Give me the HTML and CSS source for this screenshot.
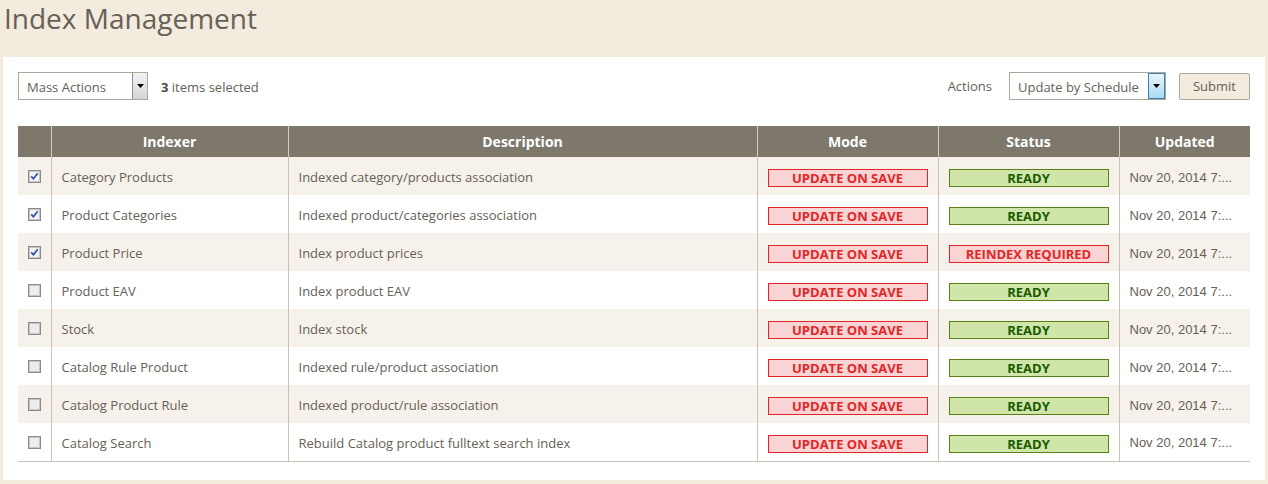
FILE: index.html
```html
<!DOCTYPE html>
<html>
<head>
<meta charset="utf-8">
<link rel="stylesheet" href="styles.css">
</head>
<body>
<h1 class="page-title">Index Management</h1>
<div class="panel">
  <div class="toolbar">
    <div class="toolbar-left">
      <div class="select mass">
        <span class="select-text">Mass Actions</span>
        <span class="select-arrow"><svg width="7" height="4" viewBox="0 0 7 4"><path d="M0 0h7L3.5 4z" fill="#000"/></svg></span>
      </div>
      <span class="selected-count"><b>3</b> items selected</span>
    </div>
    <div class="toolbar-right">
      <span class="actions-label">Actions</span>
      <div class="select schedule">
        <span class="select-text">Update by Schedule</span>
        <span class="select-arrow blue"><svg width="7" height="4" viewBox="0 0 7 4"><path d="M0 0h7L3.5 4z" fill="#000"/></svg></span>
      </div>
      <button class="submit">Submit</button>
    </div>
  </div>
  <table class="grid">
    <colgroup>
      <col class="c-check"><col class="c-indexer"><col class="c-desc"><col class="c-mode"><col class="c-status"><col class="c-updated">
    </colgroup>
    <thead>
      <tr><th></th><th>Indexer</th><th>Description</th><th>Mode</th><th>Status</th><th>Updated</th></tr>
    </thead>
    <tbody id="rows"></tbody>
  </table>
</div>
<script src="script.js"></script>
</body>
</html>
```

FILE: script.js
```js
var data = [
  ["Category Products", "Indexed category/products association", true, "READY"],
  ["Product Categories", "Indexed product/categories association", true, "READY"],
  ["Product Price", "Index product prices", true, "REINDEX REQUIRED"],
  ["Product EAV", "Index product EAV", false, "READY"],
  ["Stock", "Index stock", false, "READY"],
  ["Catalog Rule Product", "Indexed rule/product association", false, "READY"],
  ["Catalog Product Rule", "Indexed product/rule association", false, "READY"],
  ["Catalog Search", "Rebuild Catalog product fulltext search index", false, "READY"]
];
var checkOn = '<svg width="13" height="13" viewBox="0 0 13 13"><rect x="0.5" y="0.5" width="12" height="12" fill="#dcdcdc" stroke="#8a8a8a"/><rect x="1.5" y="1.5" width="10" height="10" fill="#f4f4f4" stroke="#c6c6c6"/><path d="M3.2 6.4l2.2 2.4 4.3-5.6" fill="none" stroke="#2c4fa8" stroke-width="1.7"/></svg>';
var checkOff = '<svg width="13" height="13" viewBox="0 0 13 13"><rect x="0.5" y="0.5" width="12" height="12" fill="#dcdcdc" stroke="#8a8a8a"/><rect x="1.5" y="1.5" width="10" height="10" fill="#ececec" stroke="#c6c6c6"/></svg>';
var html = "";
data.forEach(function (r) {
  var ready = r[3] === "READY";
  html += '<tr>' +
    '<td class="chk">' + (r[2] ? checkOn : checkOff) + '</td>' +
    '<td>' + r[0] + '</td>' +
    '<td>' + r[1] + '</td>' +
    '<td><span class="badge bad">UPDATE ON SAVE</span></td>' +
    '<td><span class="badge ' + (ready ? 'good' : 'bad') + '">' + r[3] + '</span></td>' +
    '<td class="date">Nov 20, 2014 7:...</td>' +
    '</tr>';
});
document.getElementById("rows").innerHTML = html;
```

FILE: styles.css
```css
html, body {
  margin: 0;
  padding: 0;
  background: #f2ebde;
  font-family: "Open Sans", "Liberation Sans", sans-serif;
  color: #676056;
}
.page-title {
  margin: 0;
  padding: 0 0 0 4px;
  height: 57px;
  font-size: 28px;
  font-weight: 400;
  line-height: 36px;
  color: #676056;
}
.panel {
  background: #fff;
  margin: 0 3px 5px 3px;
  padding: 15px 15px 18px 15px;
}
.toolbar {
  display: flex;
  justify-content: space-between;
  align-items: center;
  height: 28px;
  margin-bottom: 26px;
}
.toolbar-left, .toolbar-right {
  display: flex;
  align-items: center;
}
.select {
  display: flex;
  align-items: stretch;
  height: 26px;
  border: 1px solid #ada89e;
  background: #fff;
  box-sizing: content-box;
  font-size: 13px;
}
.select-text {
  flex: 1;
  padding-left: 8px;
  padding-top: 1px;
  line-height: 26px;
  color: #676056;
}
.select-arrow {
  width: 14px;
  border-left: 1px solid #8f8f8f;
  background: linear-gradient(#f2f2f2, #d6d6d6);
  display: flex;
  align-items: center;
  justify-content: center;
}
.select-arrow.blue {
  border: 1px solid #3c7fb1;
  background: linear-gradient(#e8f5fc, #a9dbf6);
  width: 15px;
}
.mass { width: 128px; }
.schedule { width: 155px; }
.selected-count {
  margin-left: 13px;
  padding-top: 1px;
  font-size: 13px;
  color: #676056;
}
.selected-count b { color: #4d4840; }
.actions-label {
  font-size: 13px;
  margin-right: 17px;
}
.submit {
  margin-left: 13px;
  height: 27px;
  width: 71px;
  background: #f2ebde;
  border: 1px solid #ada89e;
  border-radius: 2px;
  font-family: "Open Sans", sans-serif;
  font-size: 13px;
  color: #676056;
  padding: 0;
}
.grid {
  width: 100%;
  border-collapse: collapse;
  table-layout: fixed;
  font-size: 13px;
}
.c-check { width: 33px; }
.c-indexer { width: 237px; }
.c-desc { width: 469px; }
.c-mode { width: 181px; }
.c-status { width: 181px; }
.grid th {
  background: #7e776b;
  color: #fff;
  font-weight: 700;
  font-size: 14px;
  height: 31px;
  box-sizing: border-box;
  padding: 0 0 1px 0;
  border-left: 1px solid #d2ccc2;
  text-align: center;
}
.grid th:first-child { border-left: none; }
.grid td {
  height: 38px;
  padding: 2px 10px 0 10px;
  border-left: 1px solid #cac3b4;
  color: #676056;
  white-space: nowrap;
  overflow: hidden;
  vertical-align: middle;
  box-sizing: border-box;
}
.grid td:first-child { border-left: none; }
.grid tbody tr:nth-child(odd) td { background: #f6f2eb; }
.grid tbody tr:last-child td { border-bottom: 1px solid #c8c2b8; }
.grid td.chk {
  padding: 0 0 0 10px;
  line-height: 0;
}
.grid td.chk svg { display: block; margin-top: 1px; }
.badge {
  display: block;
  height: 18px;
  box-sizing: border-box;
  line-height: 17px;
  text-align: center;
  font-weight: 700;
  font-size: 13px;
  border: 1px solid;
  margin-top: 2px;
}
.badge.bad {
  background: #f9d4d4;
  border-color: #e22626;
  color: #e22626;
}
.badge.good {
  background: #d0e5a9;
  border-color: #5b8116;
  color: #185b00;
}
.grid td.date {
  font-family: "Liberation Sans", Arial, sans-serif;
  color: #676056;
}
```
